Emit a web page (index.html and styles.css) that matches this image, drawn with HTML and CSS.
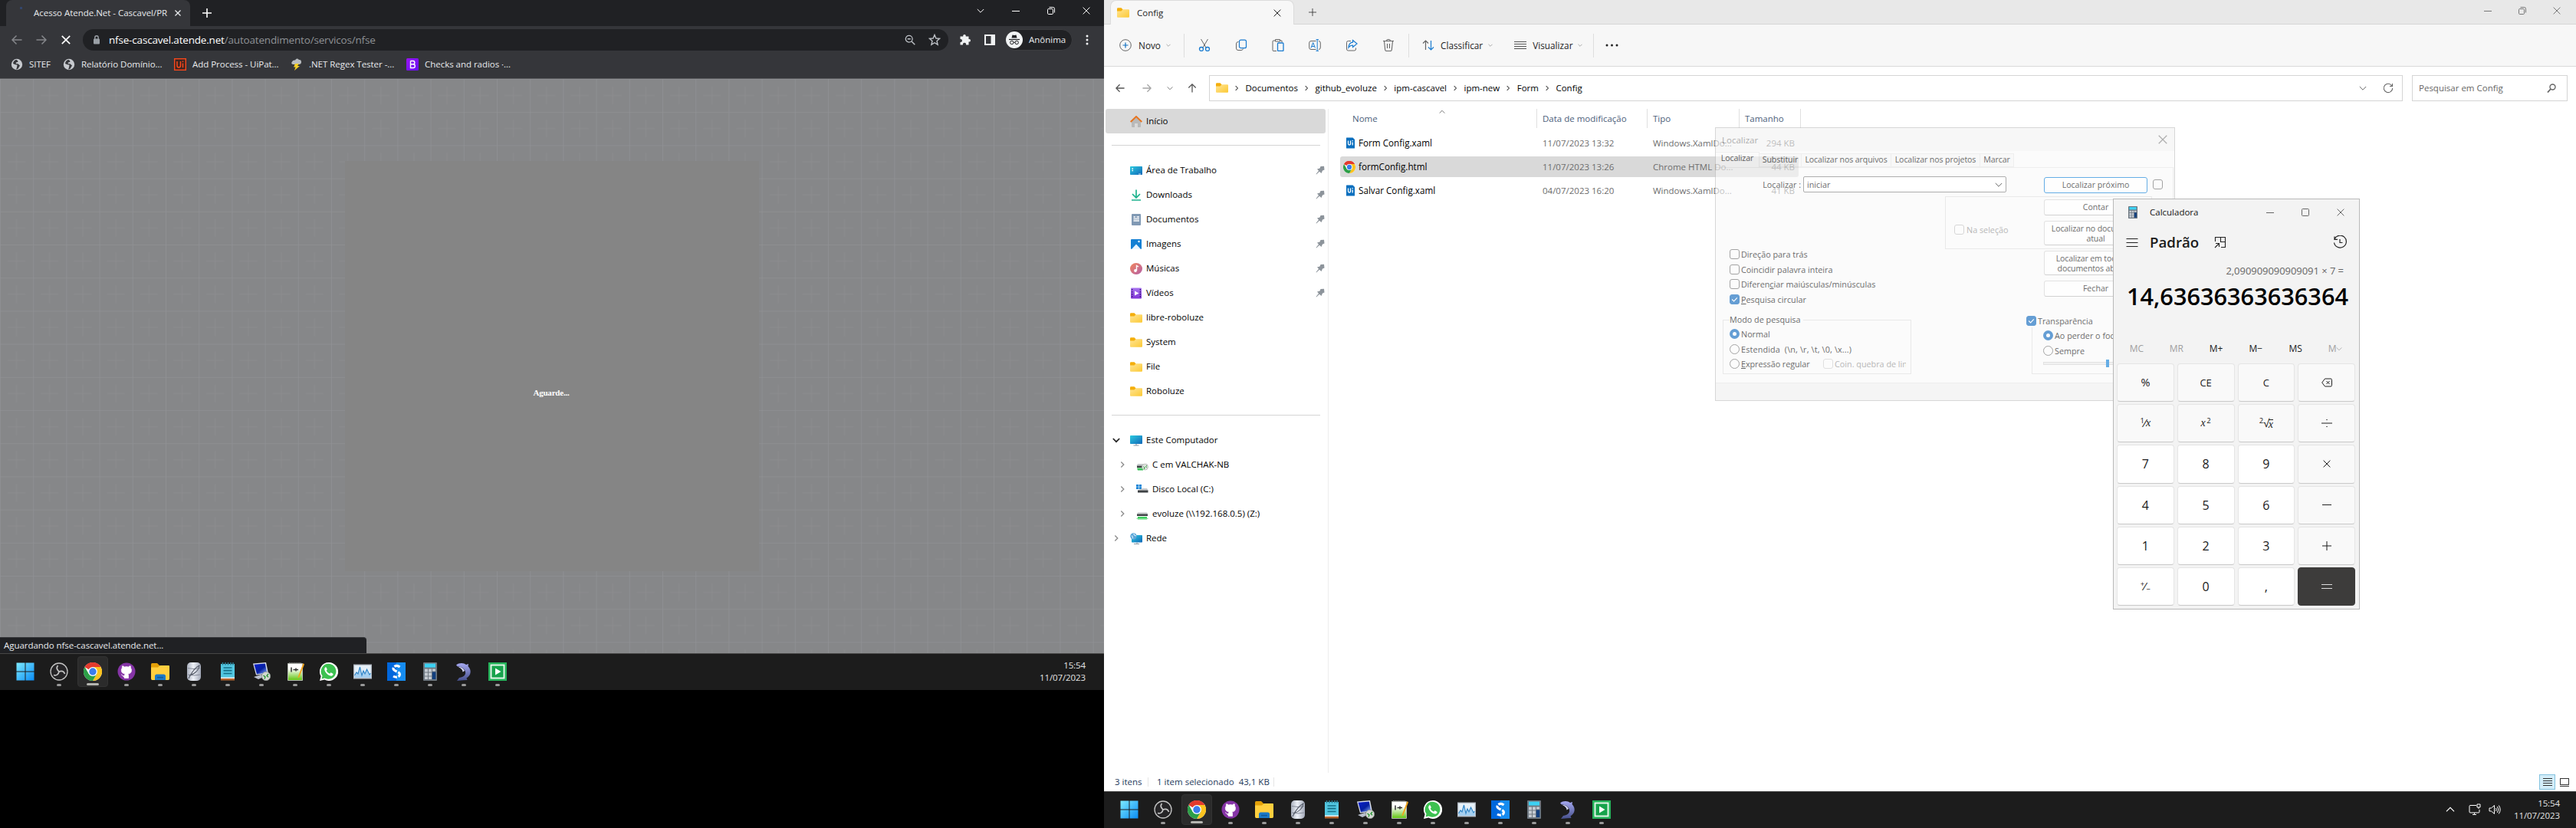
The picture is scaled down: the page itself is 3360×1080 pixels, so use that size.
FILE: index.html
```html
<!DOCTYPE html>
<html lang="pt-BR">
<head>
<meta charset="utf-8">
<title>Área de Trabalho</title>
<link rel="stylesheet" href="styles.css">
</head>
<body>
<svg class="defs" width="0" height="0" aria-hidden="true">
<defs>
<linearGradient id="gWin" x1="0" y1="0" x2="1" y2="1"><stop offset="0" stop-color="#7deaff"/><stop offset="1" stop-color="#0a8cf5"/></linearGradient>
<linearGradient id="gFold" x1="0" y1="0" x2="1" y2="1"><stop offset="0" stop-color="#ffe596"/><stop offset="1" stop-color="#fcc934"/></linearGradient>
<linearGradient id="gScr" x1="0" y1="0" x2="1" y2="1"><stop offset="0" stop-color="#2ccbe0"/><stop offset="1" stop-color="#1167b8"/></linearGradient>
<linearGradient id="gMus" x1="0" y1="0" x2="1" y2="1"><stop offset="0" stop-color="#f2855a"/><stop offset="1" stop-color="#b45fa8"/></linearGradient>
<linearGradient id="gB" x1="0" y1="0" x2="1" y2="1"><stop offset="0" stop-color="#9a13f5"/><stop offset="1" stop-color="#6610f2"/></linearGradient>
<linearGradient id="gDb" x1="0" x2="1"><stop offset="0" stop-color="#aab0bd"/><stop offset=".45" stop-color="#eef1f8"/><stop offset="1" stop-color="#a3a9b8"/></linearGradient>
<linearGradient id="gDol" x1="0" y1="0" x2="0" y2="1"><stop offset="0" stop-color="#a5a8f0"/><stop offset="1" stop-color="#46508c"/></linearGradient>
<linearGradient id="gNpp" x1="0" y1="0" x2="0" y2="1"><stop offset=".3" stop-color="#fff"/><stop offset="1" stop-color="#5ec40d"/></linearGradient>
<linearGradient id="gPc" x1="0" y1="0" x2="1" y2="1"><stop offset="0" stop-color="#0a1fd0"/><stop offset=".55" stop-color="#0620a0"/><stop offset="1" stop-color="#8fb4ff"/></linearGradient>
<linearGradient id="gVid" x1="0" y1="0" x2="0" y2="1"><stop offset="0" stop-color="#a873f0"/><stop offset="1" stop-color="#8035d8"/></linearGradient>
<pattern id="gridPat" width="43.2" height="43.2" patternUnits="userSpaceOnUse">
<path d="M0 0H43.2M0 0V43.2" stroke="#909194" stroke-width="1.6" fill="none"/>
<path d="M21.6 10V33M10 21.6H33" stroke="#8c8d90" stroke-width=".8" fill="none"/>
</pattern>
</defs>
<symbol id="chrome" viewBox="0 0 24 24"><circle cx="12" cy="12" r="12" fill="#fff"/><path d="M12 12 1.6 6A12 12 0 0 1 22.4 6L12 6Z" fill="#e33b2e"/><path d="M12 0A12 12 0 0 1 22.4 6H12L6.8 9 1.6 6A12 12 0 0 1 12 0Z" fill="#e33b2e"/><path d="M22.4 6A12 12 0 0 1 12 24L17.2 15 12 6Z" fill="#fcc31e"/><path d="M1.6 6A12 12 0 0 0 12 24L17.2 15H12L6.8 15Z" fill="#2c9f47"/><circle cx="12" cy="12" r="6" fill="#fff"/><circle cx="12" cy="12" r="4.7" fill="#3b7ded"/></symbol>
<symbol id="win" viewBox="0 0 24 24"><path d="M.5.5h11v11H.5zM12.500.5h11v11h-11zM.5 12.500h11v11H.5zM12.500 12.500h11v11h-11z" fill="url(#gWin)"/></symbol>
<symbol id="obs" viewBox="0 0 24 24"><circle cx="12" cy="12" r="11" fill="#262527" stroke="#c4c4c4" stroke-width="1.300"/><path d="M12 12C9 9.500 8.500 6.500 10.500 4M12 12c3.500-1.500 6.500-.5 7.500 3M12 12c-.8 4-3.500 5.500-7 4.500" fill="none" stroke="#c4c4c4" stroke-width="1.700"/></symbol>
<symbol id="gh" viewBox="0 0 24 24"><circle cx="12" cy="12" r="11.500" fill="#8534a6"/><path d="M9.500 20.500V17.500C6.500 18 6.300 16 5 15.500M14.500 20.500V17c0-1-.3-1.500-.7-1.900C17 14.700 18.500 13 18.500 10.200c0-1.200-.4-2.200-1.100-3 .1-.6.2-1.500-.2-2.500-1 0-2 .6-2.800 1.200a9 9 0 0 0-5 0C8.600 5.300 7.600 4.700 6.600 4.700c-.4 1-.3 1.900-.2 2.500-.7.8-1.100 1.800-1.100 3 0 2.800 1.700 4.500 4.900 4.900-.4.400-.7 1-.7 2v3.400Z" fill="#fff" stroke="#fff" stroke-width=".7"/></symbol>
<symbol id="folder" viewBox="0 0 16 13"><path d="M0 1.500Q0 .3 1.200.3H5.500L7.500 2.200V5H0Z" fill="#f4ae0b"/><path d="M0 4.400H5.500L7.500 2.300H15Q16 2.300 16 3.300V11.500Q16 12.700 15 12.700H1Q0 12.700 0 11.500Z" fill="url(#gFold)"/></symbol>
<symbol id="explorer" viewBox="0 0 24 24"><path d="M0 2.500Q0 1 1.500 1H8l3 3v5H0Z" fill="#e3a008"/><path d="M0 6.500H9L11.500 4H23q1 0 1 1V21q0 2-1.500 2H1.500Q0 23 0 21Z" fill="#ffcf3f"/><path d="M5 23V18q0-2.500 2.500-2.500h9Q19 15.500 19 18v5Z" fill="#1a79c7"/><path d="M8 18.800h8v1.600H8z" fill="#0f5a99"/></symbol>
<symbol id="db" viewBox="0 0 24 24"><rect x="3" y="0" width="18" height="24" rx="5" fill="url(#gDb)"/><path d="M4 7.500q8 2 16 0M4 16q8 2 16 0" stroke="#858b99" fill="none"/><path d="M5 21C9 13 13 7 19 4c-1 7-6 11-13 13" fill="none" stroke="#555b68" stroke-width="1.100"/></symbol>
<symbol id="notepad" viewBox="0 0 24 24"><path d="M3 2H21V21H3z" fill="#52c6e0"/><path d="M3 20H21V23.500H3z" fill="#b5622c"/><path d="M3 19.500H21V21H3z" fill="#eee"/><path d="M5.500 0V3.500M9 0V3.500M12.500 0V3.500M16 0V3.500M19 0V3.500" stroke="#2a7b91" stroke-width="1.500"/><path d="M6.500 7H17.500M6.500 10.700H17.500M6.500 14.500H17.500" stroke="#146f87" stroke-width="1.700"/></symbol>
<symbol id="rdp" viewBox="0 0 24 24"><path d="M1 1.500 18 0 21 14.500 5 16.500Z" fill="#d9deea"/><path d="M2.500 2.700 16.800 1.500 19.300 13.500 6 15.200Z" fill="url(#gPc)"/><path d="M2 19l9-3 6 2-9 4z" fill="#b9bfcc"/><circle cx="18" cy="18" r="5.700" fill="#d4d8d2" stroke="#8b918c" stroke-width=".7"/><path d="M14.500 17l2.500 2-1 2.500M21 15l-2 2.200 2 2" stroke="#24952f" stroke-width="1.300" fill="none"/></symbol>
<symbol id="npp" viewBox="0 0 24 24"><path d="M2.500 1.500H21.500V23.500H2.500z" fill="url(#gNpp)" stroke="#b3b8b0"/><path d="M4 .7H20" stroke="#888" stroke-width="1.600" stroke-dasharray="1.200 1"/><path d="M7 6.500V12.500M9.500 9.500H16M13 7.500v4" stroke="#333" stroke-width="1.500"/><path d="M22.500 1 16 18l-.6 2.800L17.500 19 24 2.500Z" fill="#f3a41b"/></symbol>
<symbol id="wa" viewBox="0 0 24 24"><path d="M12 0A12 12 0 1 1 6.300 22.500L0 24l1.600-6A12 12 0 0 1 12 0Z" fill="#fff"/><path d="M12 1.800A10 10 0 1 1 6.500 20.500L2.500 21.500l1-3.900A10 10 0 0 1 12 1.800Z" fill="#3dc151"/><path d="M8.500 6.500c-.5-.3-1.100-.2-1.500.3-1.300 1.500-1 3.500.5 5.700 2 3 4.300 4.600 6.800 5.100 1.700.3 3-.7 3.300-2.200.1-.5-.2-.8-.6-1l-2-1c-.4-.2-.7 0-1 .3l-.8 1c-2-.7-3.500-2-4.500-4l.8-1c.2-.3.300-.5.2-.9Z" fill="#fff"/></symbol>
<symbol id="perf" viewBox="0 0 24 24"><rect y="2.500" width="24" height="19" fill="#aeb4bd"/><rect x="1.300" y="3.800" width="21.400" height="16.400" fill="#e6f0f8"/><path d="M1.500 17 4 13l2 2 2.500-9 2.500 11 2-6 2 4 2.500-6L21 16l1.700-1V20H1.500z" fill="#a5cff0"/><path d="M1.500 17 4 13l2 2 2.500-9 2.500 11 2-6 2 4 2.500-6L21 16l1.500-2" fill="none" stroke="#2d83c6" stroke-width="1.100"/></symbol>
<symbol id="sapp" viewBox="0 0 24 24"><rect width="24" height="24" fill="#0067dc"/><path d="M12 0H24V24H12z" fill="#168cf0"/><path d="M16.500 6C12.500 3 8 5 8 8.200c0 3.500 8.500 3.500 8.500 7.300 0 3.300-4.500 5-8.500 2.500" fill="none" stroke="#fff" stroke-width="3.200" stroke-dasharray="7.500 1.800"/></symbol>
<symbol id="calc" viewBox="0 0 24 24"><rect x="3" width="18" height="24" rx="1" fill="#6d7780"/><rect x="5" y="1.600" width="14" height="5" fill="#3cd1f3"/><path d="M5 8.500h4v4H5zM10 8.500h4v4h-4zM15 8.500h4v3h-4zM5 13.500h4v4H5zM10 13.500h4v4h-4zM5 18.500h4v3.500H5zM10 18.500h4v3.500h-4z" fill="#c5cbd2"/><path d="M14.800 12.500h4.500V22h-4.500z" fill="#123f7d"/></symbol>
<symbol id="dolphin" viewBox="0 0 24 24"><path d="M2 3.500C6 0 12 .5 15 3l3-1-.5 3c5 5 4 12-2 15.500l1 2.500-5 .3L3 24l3-4c7-1 10-5 7-10C11 6.500 7 5.500 4 5.500Z" fill="url(#gDol)"/><path d="M5 6c4 0 7 2 8 5l-2.500 1.500C10.500 9 8 8 5 6Z" fill="#d4d6f7"/></symbol>
<symbol id="play" viewBox="0 0 24 24"><rect width="24" height="24" fill="#25b35a"/><rect x="3.500" y="3.500" width="17" height="17" fill="#17a34c" stroke="#e7f8ec" stroke-width="1.900"/><path d="M9 7.500 16.500 12 9 16.500z" fill="#fff"/></symbol>
<symbol id="globe" viewBox="0 0 16 16"><circle cx="8" cy="8" r="7.200" fill="#c6c9ce"/><path d="M7 1.800C4.500 3 3.300 4.500 3 7l3 1.200 2.500.3L8 12l-1 2.500c2 .2 3-.8 3.500-2.500L12 9.500 9.500 7.200 6.500 7 7 5.500l2.500-.7L9 3Z" fill="#35363a"/></symbol>
<symbol id="x" viewBox="0 0 10 10"><path d="M.6.6 9.400 9.400M9.400.6.6 9.400" stroke="currentColor" fill="none"/></symbol>
<symbol id="plus" viewBox="0 0 12 12"><path d="M6 0V12M0 6H12" stroke="currentColor" fill="none"/></symbol>
<symbol id="min" viewBox="0 0 10 10"><path d="M0 5.500H10" stroke="currentColor"/></symbol>
<symbol id="restore" viewBox="0 0 10 10"><rect x=".5" y="2.500" width="7" height="7" rx="1.200" fill="none" stroke="currentColor"/><path d="M2.500.5H7.500Q9.500.5 9.500 2.500V7.500" fill="none" stroke="currentColor"/></symbol>
<symbol id="max" viewBox="0 0 10 10"><rect x=".5" y=".5" width="9" height="9" rx="1" fill="none" stroke="currentColor"/></symbol>
<symbol id="cd" viewBox="0 0 10 10"><path d="M.8 3 5 7.200 9.200 3" fill="none" stroke="currentColor"/></symbol>
<symbol id="cr" viewBox="0 0 10 10"><path d="M3.300 1.500 6.800 5 3.300 8.500" fill="none" stroke="currentColor" stroke-width="1.300"/></symbol>
<symbol id="al" viewBox="0 0 14 14"><path d="M13.500 7H1M6.500 1.500 1 7l5.500 5.500" fill="none" stroke="currentColor" stroke-width="1.500"/></symbol>
<symbol id="ar" viewBox="0 0 14 14"><path d="M.5 7H13M7.500 1.500 13 7l-5.500 5.500" fill="none" stroke="currentColor" stroke-width="1.500"/></symbol>
<symbol id="au" viewBox="0 0 14 14"><path d="M7 13.500V1M1.500 6.500 7 1l5.500 5.500" fill="none" stroke="currentColor" stroke-width="1.500"/></symbol>
<symbol id="pin" viewBox="0 0 12 12"><path d="M6.500 1 11 .800 11.500 5.500 9 6.500 7.500 10 5 7.800 1 11.500.500 11 4 6.800 2 4.500 5.500 3.500Z" fill="#8d949b"/></symbol>
<symbol id="uifile" viewBox="0 0 12 15"><path d="M.5 1Q.5.500 1 .500H9L11.500 3V14Q11.500 14.500 11 14.500H1Q.5 14.500.5 14Z" fill="#0b6fbe"/><path d="M3 4.500V8.500Q3 10 4.500 10T6 8.500V4.500M8.700 6.500V10.500M8.700 4V5.200" stroke="#fff" stroke-width="1.300" fill="none"/></symbol>
<symbol id="pc" viewBox="0 0 16 15"><rect y="1" width="16" height="11" rx=".8" fill="url(#gScr)"/><path d="M4.500 14H11.500M8 12v2" stroke="#8a98a5" stroke-width="1.200"/></symbol>
</svg>

<main class="desktop">
<section class="screen left">
 <div class="chromewin">
  <div class="tabs"><div class="tab"><span class="spin"></span><span class="tabtxt">Acesso Atende.Net - Cascavel/PR</span><svg class="i8 bold"><use href="#x"/></svg></div><svg class="i12 bold newtab"><use href="#plus"/></svg>
   <div class="wc dark"><svg class="i10"><use href="#cd"/></svg><svg class="i10"><use href="#min"/></svg><svg class="i10"><use href="#restore"/></svg><svg class="i10"><use href="#x"/></svg></div></div>
  <div class="toolbar">
   <svg class="i14 dim"><use href="#al"/></svg><svg class="i14 dim"><use href="#ar"/></svg><svg class="i12 stop" viewBox="0 0 12 12"><path d="M.8.8 11.200 11.200M11.200.8.8 11.200" stroke="#fff" stroke-width="1.700"/></svg>
   <div class="omni"><svg width="10" height="12" viewBox="0 0 10 12"><rect x="1" y="4.500" width="8" height="7" rx="1" fill="#9aa0a6"/><path d="M2.800 5V3Q2.800.8 5 .8T7.200 3V5" fill="none" stroke="#9aa0a6" stroke-width="1.400"/></svg><span class="url"><b>nfse-cascavel.atende.net</b>/autoatendimento/servicos/nfse</span>
    <svg class="i14" viewBox="0 0 14 14"><circle cx="5.700" cy="5.700" r="4.400" fill="none" stroke="#bdc1c6" stroke-width="1.300"/><path d="M9 9l4.300 4.300M3.700 5.700h4" stroke="#bdc1c6" stroke-width="1.400"/></svg>
    <svg class="i16" viewBox="0 0 16 16"><path d="M8 1.500 9.900 6l4.700.4-3.600 3.100 1.100 4.700L8 11.700l-4.100 2.500L5 9.500 1.400 6.400 6.100 6Z" fill="none" stroke="#bdc1c6" stroke-width="1.400"/></svg></div>
   <svg class="i16 puzzle" viewBox="0 0 16 16"><path d="M1.500 3.500H5.300Q4.800 1 7 1T8.700 3.500H12.500V7Q15 6.500 15 8.700T12.500 10.500V14.500H9Q9.500 11.800 7 11.800T5 14.500H1.500V11Q4 11.300 4 9T1.500 7Z" fill="#f1f3f4"/></svg>
   <svg class="i14 panel" viewBox="0 0 14 14"><path d="M0 0H14V14H0zM2 2V12H8.500V2z" fill="#f1f3f4" fill-rule="evenodd"/></svg>
   <div class="anon"><svg width="22" height="22" viewBox="0 0 22 22"><circle cx="11" cy="11" r="11" fill="#f1f3f4"/><path d="M7.500 8.500 8.500 4.500 11 5 13.500 4.500 14.500 8.500z" fill="#202124"/><path d="M4 10.500H18" stroke="#202124" stroke-width="1.200"/><g fill="none" stroke="#202124"><circle cx="7.800" cy="14.500" r="2.200"/><circle cx="14.200" cy="14.500" r="2.200"/><path d="M10 14.300h2"/></g></svg><span>Anônima</span></div>
   <svg width="4" height="14" viewBox="0 0 4 14" class="kebab"><g fill="#f1f3f4"><circle cx="2" cy="2" r="1.500"/><circle cx="2" cy="7" r="1.500"/><circle cx="2" cy="12" r="1.500"/></g></svg>
  </div>
  <div class="marks">
   <span class="bm w1"><svg class="i16"><use href="#globe"/></svg>SITEF</span>
   <span class="bm w2"><svg class="i16"><use href="#globe"/></svg>Relatório Domínio...</span>
   <span class="bm w3"><svg class="i16" viewBox="0 0 16 16"><rect x=".7" y=".7" width="14.600" height="14.600" fill="#3b2420" stroke="#f8481c" stroke-width="1.400"/><path d="M4 4V9.500Q4 12 6.200 12T8.500 9.500V4M11.500 6.500V12.300M11.500 3.500V5" stroke="#f8481c" stroke-width="1.500" fill="none"/></svg>Add Process - UiPat...</span>
   <span class="bm w4"><svg class="i16" viewBox="0 0 16 16"><path d="M3 8Q0 7 2 4.500 3 2 6 2.500 8-1 11 2 14 1.500 14 5 14 7.500 11 8Z" fill="#b8bcc0"/><path d="M6 7h5L9 10h3L5 16l1.500-4.500H4Z" fill="#f5cf25"/></svg>.NET Regex Tester -...</span>
   <span class="bm w5"><svg class="i16" viewBox="0 0 16 16"><rect width="16" height="16" rx="1.500" fill="url(#gB)"/><path d="M5.500 3.500V12.500H9Q11.300 12.500 11.300 10.200T9 7.800H5.500M9 7.800Q10.800 7.800 10.800 5.700T9 3.500H5.500" fill="none" stroke="#fff" stroke-width="1.400"/></svg>Checks and radios ·...</span>
  </div>
  <div class="page"><svg class="pagegrid" width="1440" height="749"><rect width="1440" height="749" fill="url(#gridPat)"/></svg><div class="wait"><span>Aguarde...</span></div><div class="loading">Aguardando nfse-cascavel.atende.net...</div></div>
 </div>
 <footer class="taskbar">
  <span class="t start"><svg><use href="#win"/></svg></span><span class="t"><svg><use href="#obs"/></svg></span><span class="t on"><svg><use href="#chrome"/></svg></span><span class="t"><svg><use href="#gh"/></svg></span><span class="t"><svg><use href="#explorer"/></svg></span><span class="t"><svg><use href="#db"/></svg></span><span class="t"><svg><use href="#notepad"/></svg></span><span class="t"><svg><use href="#rdp"/></svg></span><span class="t"><svg><use href="#npp"/></svg></span><span class="t"><svg><use href="#wa"/></svg></span><span class="t"><svg><use href="#perf"/></svg></span><span class="t"><svg><use href="#sapp"/></svg></span><span class="t"><svg><use href="#calc"/></svg></span><span class="t"><svg><use href="#dolphin"/></svg></span><span class="t"><svg><use href="#play"/></svg></span>
  <div class="clock">15:54<br>11/07/2023</div>
 </footer>
</section>

<section class="screen right">
 <div class="exp">
  <div class="etabs"><div class="etab"><svg class="fold"><use href="#folder"/></svg><span>Config</span><svg class="i10"><use href="#x"/></svg></div><svg class="i10 enew"><use href="#plus"/></svg><div class="wc light"><svg class="i10"><use href="#min"/></svg><svg class="i10"><use href="#restore"/></svg><svg class="i10"><use href="#x"/></svg></div></div>
  <div class="cmd">
   <div class="grp novo"><svg class="i16" viewBox="0 0 16 16"><circle cx="8" cy="8" r="7.300" fill="none" stroke="#666"/><path d="M8 4.500v7M4.500 8h7" stroke="#0f6fc0" stroke-width="1.200"/></svg><span>Novo</span><svg class="i6"><use href="#cd"/></svg></div>
   <div class="grp six">
    <svg class="i16" viewBox="0 0 16 16"><path d="M3.500 0 10 11M12.500 0 6 11" stroke="#666" fill="none"/><circle cx="4" cy="13" r="2.500" fill="none" stroke="#1a7bd0" stroke-width="1.300"/><circle cx="12" cy="13" r="2.500" fill="none" stroke="#1a7bd0" stroke-width="1.300"/></svg>
    <svg class="i16" viewBox="0 0 16 16"><path d="M4.500 3.500Q1.500 3.500 1.500 6V12Q1.500 14.500 4 14.500H8Q10 14.500 10.500 12.500" fill="none" stroke="#666"/><rect x="5.500" y="1.200" width="9" height="10.500" rx="2" fill="none" stroke="#1a7bd0" stroke-width="1.200"/></svg>
    <svg class="i16" viewBox="0 0 16 16"><path d="M5 2H2Q1 2 1 3V14.500Q1 15.500 2 15.500H6M10 2H13V4M4.500.5H10.500V3H4.500z" fill="none" stroke="#666"/><rect x="7.500" y="5" width="7.500" height="10.500" rx="1" fill="none" stroke="#1a7bd0" stroke-width="1.300"/></svg>
    <svg class="i16" viewBox="0 0 16 16"><path d="M9.500 2.500H3Q.7 2.500.7 5V11Q.7 13.500 3 13.500H9.500M13 2.500Q15.300 2.500 15.300 5V11Q15.300 13.500 13 13.500" fill="none" stroke="#666"/><path d="M11.200 1V15M9.500.6H13M9.500 15.400H13M3 11.500 5.700 4.500 8.400 11.500M4 9.500H7.500" fill="none" stroke="#1a7bd0"/></svg>
    <svg class="i16" viewBox="0 0 16 16"><path d="M7 2.500H3.500Q1.500 2.500 1.500 4.500V13Q1.500 15 3.500 15H11.500Q13.500 15 13.500 13V11.500" fill="none" stroke="#666"/><path d="M9.500 1.500 15 6 9.500 10.500V8Q6 8 4 11 4.500 4.500 9.500 4.200Z" fill="none" stroke="#1a7bd0" stroke-width="1.200"/></svg>
    <svg class="i16" viewBox="0 0 16 16"><path d="M1 2.500H15M5.500 2.500Q5.500.5 8 .5T10.500 2.500M2.500 2.500 3.700 14Q3.900 15.500 5.300 15.500H10.700Q12.100 15.500 12.300 14L13.500 2.500M6.500 6V12M9.500 6V12" fill="none" stroke="#666" stroke-width="1.100"/></svg>
   </div>
   <div class="grp sv"><svg class="i16" viewBox="0 0 16 16"><path d="M4.500 14V2M1 5.500 4.500 2 8 5.500" fill="none" stroke="#666" stroke-width="1.200"/><path d="M11.500 2V14M8 10.500 11.500 14 15 10.500" fill="none" stroke="#1a7bd0" stroke-width="1.200"/></svg><span>Classificar</span><svg class="i6"><use href="#cd"/></svg>
    <svg class="i16 view" viewBox="0 0 16 16"><path d="M0 3.500H16M0 6.500H16M0 9.500H16M0 12.500H16" stroke="#555"/></svg><span>Visualizar</span><svg class="i6"><use href="#cd"/></svg></div>
   <svg class="more" width="17" height="4" viewBox="0 0 17 4"><g fill="#222"><circle cx="2" cy="2" r="1.500"/><circle cx="8.500" cy="2" r="1.500"/><circle cx="15" cy="2" r="1.500"/></g></svg>
  </div>
  <div class="addr">
   <div class="nav"><svg class="i12"><use href="#al"/></svg><svg class="i12 faint"><use href="#ar"/></svg><svg class="i8"><use href="#cd"/></svg><svg class="i12"><use href="#au"/></svg></div>
   <div class="path"><svg class="fold"><use href="#folder"/></svg><svg class="i8"><use href="#cr"/></svg><span>Documentos</span><svg class="i8"><use href="#cr"/></svg><span>github_evoluze</span><svg class="i8"><use href="#cr"/></svg><span>ipm-cascavel</span><svg class="i8"><use href="#cr"/></svg><span>ipm-new</span><svg class="i8"><use href="#cr"/></svg><span>Form</span><svg class="i8"><use href="#cr"/></svg><span>Config</span><svg class="i10 pend"><use href="#cd"/></svg><svg class="i14 rf" viewBox="0 0 14 14"><path d="M12 4.200A5.700 5.700 0 1 0 12.700 7M12.500 1V4.500H9" fill="none" stroke="#666" stroke-width="1.100"/></svg></div>
   <div class="search"><span>Pesquisar em Config</span><svg class="i12" viewBox="0 0 12 12"><circle cx="7.500" cy="4.500" r="3.500" fill="none" stroke="#666" stroke-width="1.400"/><path d="M5 7 1 11.500" stroke="#666" stroke-width="1.800"/></svg></div>
  </div>
  <div class="mid">
   <nav class="side">
    <div class="r sel"><svg class="ic" viewBox="0 0 16 15"><path d="M2 7V14Q2 15 3 15H6V10H10V15H13Q14 15 14 14V7L8 2Z" fill="#b9b9b9"/><path d="M.7 8 8 1 15.300 8" fill="none" stroke="#e8741e" stroke-width="1.900"/></svg>Início</div>
    <hr>
    <div class="r"><svg class="ic" viewBox="0 0 16 15"><rect y="2" width="16" height="11" rx=".7" fill="url(#gScr)"/><path d="M2.500 5H4M2.500 7.500H4" stroke="#fff" stroke-width="1.300"/><path d="M11 12h3" stroke="#fff" stroke-width=".8"/></svg>Área de Trabalho<svg class="i12 pin"><use href="#pin"/></svg></div>
    <div class="r"><svg class="ic" viewBox="0 0 16 15"><path d="M8 .500V10.500M3 6 8 11 13 6M2 14H14" fill="none" stroke="#1eb38e" stroke-width="1.700"/></svg>Downloads<svg class="i12 pin"><use href="#pin"/></svg></div>
    <div class="r"><svg class="ic" viewBox="0 0 16 15"><rect x="2" width="12" height="15" rx="1" fill="#8099b4"/><path d="M4.500 4H7M8.500 4H12M4.500 6.500H12M4.500 9H12" stroke="#fff" stroke-width="1.300"/></svg>Documentos<svg class="i12 pin"><use href="#pin"/></svg></div>
    <div class="r"><svg class="ic" viewBox="0 0 16 15"><rect x="1" y="1" width="14" height="13" rx="1" fill="#1480d4"/><path d="M2 14 8 7.500 14 14Z" fill="#eaf6ff"/><circle cx="11.500" cy="4" r="1.200" fill="#fff"/></svg>Imagens<svg class="i12 pin"><use href="#pin"/></svg></div>
    <div class="r"><svg class="ic" viewBox="0 0 16 15"><ellipse cx="8" cy="7.500" rx="8" ry="7.500" fill="url(#gMus)"/><path d="M8.500 10V3.500L11 5" fill="none" stroke="#fff" stroke-width="1.400"/><circle cx="7" cy="10" r="1.900" fill="#fff"/></svg>Músicas<svg class="i12 pin"><use href="#pin"/></svg></div>
    <div class="r"><svg class="ic" viewBox="0 0 16 15"><rect x="1" y=".5" width="14" height="14" rx="1" fill="url(#gVid)"/><path d="M2.700 2V13M13.300 2V13" stroke="#3b1b73" stroke-width="1.400" stroke-dasharray="1.500 1.500"/><path d="M6 4.500 11.500 7.500 6 10.500z" fill="#fff"/></svg>Vídeos<svg class="i12 pin"><use href="#pin"/></svg></div>
    <div class="r"><svg class="fold"><use href="#folder"/></svg>libre-roboluze</div>
    <div class="r"><svg class="fold"><use href="#folder"/></svg>System</div>
    <div class="r"><svg class="fold"><use href="#folder"/></svg>File</div>
    <div class="r"><svg class="fold"><use href="#folder"/></svg>Roboluze</div>
    <hr>
    <div class="r tree"><svg class="i10 open" viewBox="0 0 10 10"><path d="M.8 3 5 7.200 9.200 3" fill="none" stroke="#222" stroke-width="1.700"/></svg><svg class="ic"><use href="#pc"/></svg>Este Computador</div>
    <div class="r tree sub"><svg class="i10"><use href="#cr"/></svg><svg class="ic" viewBox="0 0 16 15"><path d="M2 6H14L15 8.500H.5Z" fill="#c5c8ca"/><path d="M1 8.500h9v2.500H1z" fill="#3d4144"/><path d="M1 11.500h8v3H2z" fill="#3cc45a"/><circle cx="11.500" cy="10" r="4" fill="#dde2dd" stroke="#aaa" stroke-width=".6"/><path d="M9.500 9.500 11 11 10.300 13M14 8 12.500 9.500 13.500 11" stroke="#2b9b36" fill="none"/></svg>C em VALCHAK-NB</div>
    <div class="r tree sub"><svg class="i10"><use href="#cr"/></svg><svg class="ic" viewBox="0 0 16 15"><path d="M0 1h3.200v2.700H0zM3.800 1H7v2.700H3.800zM0 4.300h3.200V7H0zM3.800 4.300H7V7H3.800z" fill="#1283d6"/><path d="M8 6H14L15.500 8.500H2Z" fill="#c5c8ca"/><path d="M2 8.500h13.500v3H2z" fill="#3d4144"/></svg>Disco Local (C:)</div>
    <div class="r tree sub"><svg class="i10"><use href="#cr"/></svg><svg class="ic" viewBox="0 0 16 15"><path d="M2 5.500H14L15 7.500H1Z" fill="#c5c8ca"/><path d="M1 7.500h14v2.500H1z" fill="#3d4144"/><path d="M2 11h12v3.500H2z" fill="#3dcf5f"/><path d="M.5 13.500h15" stroke="#79dd8c"/></svg>evoluze (\\192.168.0.5) (Z:)</div>
    <div class="r tree"><svg class="i10"><use href="#cr"/></svg><svg class="ic" viewBox="0 0 16 15"><rect x="2" y="3" width="14" height="9.500" rx=".8" fill="url(#gScr)"/><path d="M5 14.500H12M9 12.500v2" stroke="#8a98a5"/><circle cx="4.500" cy="4.500" r="4.200" fill="#5ba6d8"/><path d="M2 3.500Q4 5 3.500 7.500M5 .8Q4.500 3 8 4" stroke="#c9e5f5" stroke-width="1.300" fill="none"/></svg>Rede</div>
   </nav>
   <div class="files">
    <svg class="i8 sort"><use href="#cd"/></svg>
    <div class="fh"><span>Nome</span><span>Data de modificação</span><span>Tipo</span><span>Tamanho</span></div>
    <div class="fr"><span><svg class="uf"><use href="#uifile"/></svg>Form Config.xaml</span><span>11/07/2023 13:32</span><span>Windows.XamlDo...</span><span>294 KB</span></div>
    <div class="fr hl"><span><svg class="uf16"><use href="#chrome"/></svg>formConfig.html</span><span>11/07/2023 13:26</span><span>Chrome HTML Do...</span><span>44 KB</span></div>
    <div class="fr"><span><svg class="uf"><use href="#uifile"/></svg>Salvar Config.xaml</span><span>04/07/2023 16:20</span><span>Windows.XamlDo...</span><span>41 KB</span></div>
   </div>
  </div>
  <div class="status"><span class="s1">3 itens</span><span class="s2">1 item selecionado&nbsp; 43,1 KB</span><div class="views"><span class="vsel"><svg width="12" height="10" viewBox="0 0 12 10"><path d="M0 .5H12M0 3.500H12M0 6.500H12M0 9.500H12" stroke="#333"/></svg></span><svg width="12" height="11" viewBox="0 0 12 11"><rect x=".5" y=".5" width="11" height="8" fill="none" stroke="#333"/><path d="M0 10.500H12" stroke="#333"/></svg></div></div>
 </div>
 <footer class="taskbar">
  <span class="t start"><svg><use href="#win"/></svg></span><span class="t"><svg><use href="#obs"/></svg></span><span class="t on"><svg><use href="#chrome"/></svg></span><span class="t"><svg><use href="#gh"/></svg></span><span class="t"><svg><use href="#explorer"/></svg></span><span class="t"><svg><use href="#db"/></svg></span><span class="t"><svg><use href="#notepad"/></svg></span><span class="t"><svg><use href="#rdp"/></svg></span><span class="t"><svg><use href="#npp"/></svg></span><span class="t"><svg><use href="#wa"/></svg></span><span class="t"><svg><use href="#perf"/></svg></span><span class="t"><svg><use href="#sapp"/></svg></span><span class="t"><svg><use href="#calc"/></svg></span><span class="t"><svg><use href="#dolphin"/></svg></span><span class="t"><svg><use href="#play"/></svg></span>
  <div class="tray"><svg class="i12 up"><use href="#cd"/></svg><svg class="i16" viewBox="0 0 16 16"><path d="M10 2.500H2Q1 2.500 1 3.500V11Q1 12 2 12H13Q14 12 14 11V8M5 14.500H10M7.500 12v2.500M11 1h4v4h-4zM13 5v2" fill="none" stroke="#fff"/></svg><svg class="i16" viewBox="0 0 16 16"><path d="M1 6H3.500L7.500 2.500V13.500L3.500 10H1ZM9.500 6Q10.800 8 9.500 10M11.500 4Q14 8 11.500 12M13.300 2.500Q17 8 13.300 13.500" fill="none" stroke="#fff"/></svg></div>
  <div class="clock">15:54<br>11/07/2023</div>
 </footer>
</section>

<section class="dlg">
 <div class="dt"><span>Localizar</span><svg class="i12"><use href="#x"/></svg></div>
 <div class="dtabs"><span class="act">Localizar</span><span>Substituir</span><span>Localizar nos arquivos</span><span>Localizar nos projetos</span><span>Marcar</span></div>
 <div class="pane">
  <div class="find"><span>Localizar :</span><div class="combo">iniciar<svg class="i10"><use href="#cd"/></svg></div></div>
  <div class="nasel"><i class="cb"></i>Na seleção</div>
  <div class="btns"><span class="b def">Localizar próximo</span><span class="b">Contar</span><span class="b two">Localizar no documento<br>atual</span><span class="b two">Localizar em todos os<br>documentos abertos</span><span class="b">Fechar</span></div>
  <i class="cb extra"></i>
  <div class="opts"><span class="o"><i class="cb"></i><span>Direção para trás</span></span><span class="o"><i class="cb"></i><span>Coincidir palavra inteira</span></span><span class="o"><i class="cb"></i><span>Diferen<u>c</u>iar maiúsculas/minúsculas</span></span><span class="o"><i class="cb ck"><svg viewBox="0 0 10 10"><path d="M2 5 4.200 7.200 8 3" fill="none" stroke="#fff"/></svg></i><span><u>P</u>esquisa circular</span></span></div>
  <fieldset class="mode"><legend>Modo de pesquisa</legend><span class="o"><i class="rd on"></i><span>Normal</span></span><span class="o"><i class="rd"></i><span class="ext">Estendida&nbsp; (\n, \r, \t, \0, \x...)</span></span><span class="o"><i class="rd"></i><span class="rx"><u>E</u>xpressão regular</span><i class="cb dis"></i><em>Coin. quebra de linha</em></span></fieldset>
  <div class="trans"><span class="o"><i class="cb ck"><svg viewBox="0 0 10 10"><path d="M2 5 4.200 7.200 8 3" fill="none" stroke="#fff"/></svg></i>Transparência</span><div class="tb"><span class="o"><i class="rd on"></i>Ao perder o foco</span><span class="o"><i class="rd"></i>Sempre</span><div class="slider"><b></b></div></div></div>
 </div>
</section>

<section class="calcw">
 <div class="ct"><svg class="i16"><use href="#calc"/></svg><span>Calculadora</span><svg class="i10"><use href="#min"/></svg><svg class="i10"><use href="#max"/></svg><svg class="i10"><use href="#x"/></svg></div>
 <div class="ch"><svg class="i16" viewBox="0 0 16 16"><path d="M.5 3.500H15.500M.5 8.500H15.500M.5 13.500H15.500" stroke="#222"/></svg><b>Padrão</b><svg class="i16" viewBox="0 0 16 16"><path d="M1.500 7V1.500H14.500V14.500H9M8.500 1.500V7.500H14.500M1 15 6 10M2 9.500H6.500V14" fill="none" stroke="#222" stroke-width="1.100"/></svg><svg class="i18" viewBox="0 0 18 18"><path d="M2 5A8 8 0 1 1 1.500 9.500M2 1.500V5.300H6M9 5V9.500H12.500" fill="none" stroke="#222" stroke-width="1.200"/></svg></div>
 <div class="ex">2,090909090909091 × 7 =</div>
 <div class="res">14,63636363636364</div>
 <div class="mem"><span class="off">MC</span><span class="off">MR</span><span>M+</span><span>M−</span><span>MS</span><span class="off">M<svg class="i8"><use href="#cd"/></svg></span></div>
 <div class="keys">
  <span class="k f pc">%</span><span class="k f sm">CE</span><span class="k f sm">C</span><span class="k f"><svg width="14" height="12" viewBox="0 0 14 12"><path d="M4.500 1H12Q13.500 1 13.500 2.500V9.500Q13.500 11 12 11H4.500L.7 6ZM6.500 4 10.500 8M10.500 4 6.500 8" fill="none" stroke="#222"/></svg></span>
  <span class="k f it"><sup>1</sup><span class="sl">/</span><i>x</i></span><span class="k f it"><i>x</i><sup>&thinsp;2</sup></span><span class="k f it"><sup>2</sup><span class="rt">√</span><i class="ov">x</i></span><span class="k f"><svg width="14" height="12" viewBox="0 0 14 12"><path d="M0 6H14M6.300 1.500h1.400M6.300 10.500h1.400" stroke="#222" stroke-width="1.200"/></svg></span>
  <span class="k">7</span><span class="k">8</span><span class="k">9</span><span class="k f"><svg class="i10"><use href="#x"/></svg></span>
  <span class="k">4</span><span class="k">5</span><span class="k">6</span><span class="k f"><svg class="i12" viewBox="0 0 12 12"><path d="M0 5.500H12" stroke="#222"/></svg></span>
  <span class="k">1</span><span class="k">2</span><span class="k">3</span><span class="k f"><svg class="i12"><use href="#plus"/></svg></span>
  <span class="k it"><sup>+</sup><span class="sl">/</span><sub>−</sub></span><span class="k">0</span><span class="k">,</span><span class="k eq"><svg width="14" height="8" viewBox="0 0 14 8"><path d="M0 1.500H14M0 6.500H14" stroke="#ddd" stroke-width="1.200"/></svg></span>
 </div>
</section>
</main>
</body>
</html>
```
FILE: styles.css
```css
*{box-sizing:border-box}
body{margin:0;background:#000;font:11.5px/16px "Open Sans","Noto Sans",sans-serif;color:#000;overflow:hidden}
.defs{position:absolute}
svg{display:block;flex:none}
.i6{width:6px;height:6px}.i8{width:8px;height:8px}.i10{width:10px;height:10px}.i12{width:12px;height:12px}
.i14{width:14px;height:14px}.i16{width:16px;height:16px}.i18{width:18px;height:18px}
.desktop{position:relative;display:flex;width:3360px;height:1080px;white-space:nowrap}
.screen{display:flex;flex-direction:column}
.left{width:1440px;height:900px}
.right{width:1920px;height:1080px}

/* browser */
.chromewin{flex:1;display:flex;flex-direction:column;min-height:0;color:#e8eaed}
.tabs{height:34px;background:#202124;display:flex;align-items:center;padding-left:8px}
.tab{width:240px;height:34px;background:#35363a;border-radius:8px 8px 0 0;display:flex;align-items:center;padding-left:18px}
.spin{width:3px;height:3px;background:#33466c;margin:-14px 15px 0 0}
.tabtxt{width:176px;margin-right:8px;letter-spacing:-.02px}
.bold{stroke-width:1.6}
.newtab{margin-left:16px;color:#fff}
.wc{margin-left:auto;display:flex}
.dark{gap:36px;padding:0 18px 6px 0;color:#fff}
.toolbar{height:35px;background:#35363a;display:flex;align-items:center;padding:1px 0 0 15px}
.toolbar>.i14.dim{color:#85878b;margin-right:18px}
.toolbar>.stop{margin-left:1px}
.omni{width:1129px;height:28px;margin-left:16px;border-radius:14px;background:#202124;display:flex;align-items:center;padding:0 10px 0 13px}
.url{flex:1;margin-left:11px;font-size:13.5px;color:#8e9195;letter-spacing:-.18px}
.url b{font-weight:400;color:#fff}
.omni .i16{margin-left:17px}
.puzzle{margin-left:14px}
.panel{margin:0 13px 0 17px}
.anon{width:88px;height:28px;border:1px solid #3c3d40;border-radius:14px;background:#202124;display:flex;align-items:center;gap:8px}
.kebab{margin-left:17px}
.marks{height:34px;background:#35363a;border-bottom:1px solid #5b5c5f;display:flex;align-items:center;padding-left:14px;padding-bottom:4px}
.bm{display:flex;align-items:center;gap:8px;letter-spacing:-.03px}
.w1{width:68px}.w2{width:145px}.w3{width:152px}.w4{width:151px}.w5{width:150px}
.page{flex:1;background:#868789;position:relative;display:flex;justify-content:center;align-items:flex-start}
.pagegrid{position:absolute;inset:0}
.wait{position:relative;width:540px;height:535px;margin-top:107px;background:#858585;display:flex;align-items:center;justify-content:center;padding:69px 2px 0 0;font:bold 11px/14px "Liberation Serif",serif;color:#fff;letter-spacing:-.2px}
.loading{position:absolute;left:0;bottom:0;width:478px;height:21px;padding:2px 5px;background:#202124;border-radius:0 4px 0 0;border-top:1px solid #35363a;letter-spacing:-.05px}

/* taskbar */
.taskbar{height:48px;flex:none;background:#1c1c1c;border-top:1px solid #464646;display:flex;align-items:center;padding:0 0 1px 12.500px;color:#e3e3e3}
.t{position:relative;width:40px;height:40px;margin-right:4px;display:flex;align-items:center;justify-content:center;border-radius:4px}
.t svg{width:24px;height:24px}
.t::after{content:"";position:absolute;bottom:1px;left:17px;width:6px;height:3px;border-radius:2px;background:#999}
.t.start::after{display:none}
.t.on{background:#2b2b2b;border:1px solid #333}
.t.on::after{left:11px;width:16px;background:#b5b5b0}
.clock{margin-left:auto;text-align:right;padding-right:24px;line-height:16px;letter-spacing:-.1px}
.tray{margin-left:auto;display:flex;align-items:center;gap:18px;color:#fff}
.tray .i16+.i16{margin-left:-8px}
.tray+.clock{margin-left:17px;padding-right:21px}
.up{transform:scaleY(-1)}

/* file explorer */
.exp{flex:1;background:#fff;display:flex;flex-direction:column;min-height:0}
.etabs{height:32px;background:#e8e8e8;border-bottom:1px solid #d6d6d6;display:flex;align-items:center;padding-left:8px;color:#333}
.etab{width:240px;height:32px;align-self:flex-start;background:#f7f7f7;border:1px solid #dcdcdc;border-bottom:0;border-radius:8px 8px 0 0;display:flex;align-items:center;padding-left:8px;color:#222}
.fold{width:16px;height:13px}
.etab span{margin-left:10px;width:178px}
.enew{margin-left:19px}
.light{gap:35px;padding:0 20px 4px 0;color:#777}
.cmd{height:55px;background:#f7f7f7;border-bottom:1px solid #d9d9d9;display:flex;align-items:center;color:#222}
.grp{height:31px;border-right:1px solid #dedede;display:flex;align-items:center}
.grp .i6{color:#777;margin-left:7px}
.grp span{font-size:11.800px}
.novo{width:105px;padding-left:20px}
.novo span{margin-left:9px}
.six{width:293px;padding-left:18px;gap:32px}
.sv{width:241px;padding-left:17px}
.sv span{margin-left:8px}
.sv .view{margin-left:28px}
.more{margin-left:15px}
.addr{height:55px;display:flex;align-items:center}
.nav{width:137px;padding-left:15px;display:flex;align-items:center;color:#555}
.nav .i12{margin-right:23px}.nav .faint{margin-right:20px;color:#a5a5a5}.nav .i8{margin:0 19px 0 0}.nav .i12:last-child{margin:0}
.path{width:1557px;height:34px;border:1px solid #d5d5d5;display:flex;align-items:center;padding-left:8px}
.path .i8{margin:0 7.500px 0 7px;color:#444}
.path .pend{margin-left:auto;color:#666}
.rf{margin:0 11px 0 21px}
.search{width:203px;height:34px;margin-left:12px;border:1px solid #d5d5d5;display:flex;align-items:center;justify-content:space-between;padding:0 14px 0 8px;color:#666}
.mid{flex:1;display:flex;min-height:0}
.side{width:293px;border-right:1px solid #ededed}
.r{height:32px;padding:0 4px 0 34px;display:flex;align-items:center}
.r.sel{margin:0 3px 0 2px;padding-left:32px;background:#d9d9d9;border-radius:3px}
.r .ic{width:16px;height:15px;margin-right:5px}
.r .fold{margin-right:5px}
.r .pin{margin-left:auto}
.side hr{border:0;border-top:1px solid #d4d4d4;margin:15px 10px 16px}
.tree{padding-left:11px}
.tree>.i10{margin-right:13px;color:#8b8b8b}
.sub{padding-left:19px}
.files{padding-left:15px}
.sort{margin:0 0 -8px 129px;transform:scaleY(-1);color:#555}
.fh,.fr{display:grid;grid-template-columns:257px 144px 120px 80px}
.fh{height:25px;color:#4c607a;line-height:25px;margin-bottom:6px}
.fh span{border-right:1px solid #e0e0e0;padding-left:7px}
.fh span:first-child{padding-left:16px}
.fr{height:27px;width:598px;margin-bottom:4px;line-height:27px;color:#6d6d6d;border-radius:3px}
.fr span{padding-left:7px}
.fr span:first-child{display:flex;align-items:center;color:#000;padding-left:5px;font-size:11.700px}
.fr span:last-child{width:72px;text-align:right;padding:0}
.hl{background:#d9d9d9}
.uf{width:13px;height:15px;margin:0 4px 0 2px}
.uf16{width:16px;height:16px;margin:0 4px 0 -1px}
.status{height:24px;display:flex;align-items:center;padding-left:14px;color:#1e395b}
.s1,.s2{height:12px;line-height:12px;border-right:1px solid #e5e5e5}
.s1{width:44px}.s2{width:164px;padding-left:11px}
.views{margin-left:auto;display:flex;align-items:center;gap:6px;padding-right:9px}
.vsel{width:21px;height:20px;border:1px solid #84c3df;background:#d3edf9;display:flex;align-items:center;justify-content:center}

/* find window */
.dlg{position:absolute;left:2237px;top:166px;width:600px;height:357px;opacity:.6;background:#f0f0f0;border:1px solid #bdbdbd;font-size:10.800px;line-height:13px;display:flex;flex-direction:column}
.dt{height:30px;background:#f3f3f3;display:flex;align-items:center;justify-content:space-between;padding:0 9px 0 8px;color:#777;font-size:11.500px}
.dtabs{height:21px;background:#f9f9f9;display:flex;align-items:flex-end;font-size:10.600px;letter-spacing:-.1px}
.dtabs span{height:18px;border:1px solid #e4e4e4;border-left:0;text-align:center;line-height:15px;background:#f5f5f5}
.dtabs .act{width:57px;height:20px;background:#f9f9f9;border-bottom:0}
.dtabs span:nth-child(2){width:55px}.dtabs span:nth-child(3){width:117px}.dtabs span:nth-child(4){width:116px}.dtabs span:nth-child(5){width:44px}
.pane{width:597px;height:282px;background:#f9f9f9;border:1px solid #e4e4e4;border-left:0;display:grid;grid-template-columns:298px 81px 49px 135px 1fr;grid-template-rows:37px 69px 85px 1fr;align-items:start}
.find{grid-area:1/1/2/3;display:flex;align-items:center;justify-content:flex-end;gap:3px;margin-top:11px}
.combo{width:265px;height:21px;border:1px solid #777;border-radius:2px;background:#fff;padding:0 4px;display:flex;align-items:center;justify-content:space-between}
.nasel{grid-area:2/2/3/6;width:270px;height:69px;margin-left:1px;border:1px solid #dcdcdc;display:flex;align-items:center;gap:3px;padding:18px 0 0 11px;color:#888}
.nasel .cb{border-color:#bbb}
.btns{grid-area:1/4/5/5;display:flex;flex-direction:column;gap:7px;padding-top:12px;font-size:10.600px}
.b{height:21px;border:1px solid #cfcfcf;border-bottom-color:#b4b4b4;border-radius:3px;background:#fefefe;text-align:center;line-height:19px;overflow:hidden}
.b.def{border-color:#0078d4;margin-bottom:1px}
.b.two{height:32px;line-height:13px;padding-top:3px;letter-spacing:-.15px}
.extra{grid-area:1/5;margin:15px 0 0 7px}
.cb,.rd{display:block;flex:none;width:13px;height:13px;border:1px solid #666;border-radius:3px;background:#fbfbfb}
.rd{border-radius:50%}
.rd.on{border:4px solid #005fb8;background:#fff}
.ck{background:#005fb8;border-color:#005fb8}
.o{display:flex;align-items:center;gap:2px;height:19.600px}
.opts{grid-area:3/1;padding-left:18px;margin-top:-3px}
.mode{grid-area:4/1;width:246px;height:78px;margin:0 0 0 9px;padding:2px 6px 0 8px;border:1px solid #dcdcdc;overflow:hidden;min-width:0}
.mode legend{padding:0 3px 0 0;line-height:14px}
.ext{letter-spacing:.15px}
.rx{width:88px;letter-spacing:-.05px}
.mode .dis{margin-left:17px;border-color:#ccc}
.mode em{font-style:normal;color:#888;overflow:hidden;width:93px}
.trans{grid-area:4/2/5/6;padding-left:107px;height:78px}
.trans>.o{height:17px}
.tb{margin-left:7px;border:1px solid #dcdcdc;border-top:0;padding:1px 0 0 14px;height:61px}
.slider{height:4px;margin:5px 40px 0 0;border:1px solid #d0d0d0;background:#e8e8e8}
.slider b{display:block;width:4px;height:10px;margin:-4px 0 0 81px;background:#0078d4}

/* calculator */
.calcw{position:absolute;left:2756px;top:259px;width:322px;height:536px;background:#f3f3f3;border:1px solid #b9b9b9;padding:0 5px 4px 4px;display:flex;flex-direction:column;color:#1b1b1b}
.ct{height:34px;display:flex;align-items:center;padding:0 14px 0 13px;color:#666}
.ct span{margin:0 auto 0 14px;color:#111}
.ct .i10{margin-left:36px}
.ch{height:44px;display:flex;align-items:center;padding:0 11px 0 12px}
.ch b{font-size:18.700px;font-weight:600;margin:0 20px 0 15px;line-height:24px}
.ch .i18{margin-left:auto}
.ex{height:30px;line-height:30px;text-align:right;padding-right:15px;font-size:13px;color:#666;letter-spacing:-.05px}
.res{height:40px;line-height:36px;text-align:right;padding-right:9px;font-size:30.700px;font-weight:600;color:#000}
.mem{height:66px;padding-top:28px;display:grid;grid-template-columns:repeat(6,1fr);text-align:center;font-size:12px}
.mem span{display:flex;justify-content:center;align-items:center;height:38px}
.mem .off{color:#a0a0a0}
.keys{flex:none;height:316px;display:grid;grid-template-columns:repeat(4,1fr);grid-template-rows:repeat(6,1fr);gap:3px 4px}
.k{background:#fff;border:1px solid #e5e5e5;border-bottom-color:#c9c9c9;border-radius:4px;display:flex;align-items:center;justify-content:center;font-size:16px}
.f{background:#f9f9f9}
.sm{font-size:13px}
.pc{font-size:14.500px}
.eq{background:#3d3c3b;border-color:#3d3c3b}
.it{font-size:14px}
.it i{font-family:"Liberation Serif",serif}
.it sup,.it sub{font-size:9.500px;line-height:1}
.it sup{margin-top:-7px}
.it sub{margin-top:8px}
.sl{margin:0 -1px 0 -2px;transform:skewX(-14deg)}
.it sl+i{margin-top:3px}
.ov{border-top:1px solid #222;line-height:11px;margin-top:2px}
.rt{margin-right:-1px}
```
